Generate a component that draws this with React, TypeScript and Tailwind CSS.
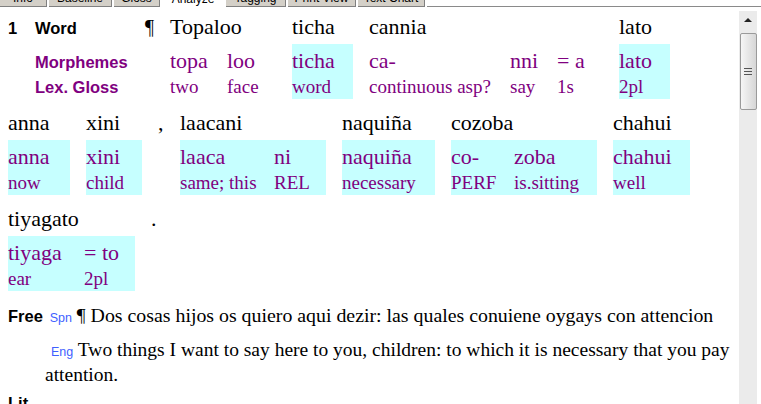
type Morph = { m: string; g: string; w: string };
type Item =
  | { kind: "word"; word: string; hl?: boolean; morphs: Morph[] }
  | { kind: "punct"; text: string; w: string };

const PURPLE = "text-[#800080]";
const HL = "bg-[#c6ffff]";
const SANS = "font-['Liberation_Sans',Arial,sans-serif]";

const tabs = [
  { label: "Info", w: "w-[47px]" },
  { label: "Baseline", w: "w-[63px]" },
  { label: "Gloss", w: "w-[46px]" },
  { label: "Analyze", w: "w-[62px]", active: true },
  { label: "Tagging", w: "w-[60px]" },
  { label: "Print View", w: "w-[68px]" },
  { label: "Text Chart", w: "w-[67px]" },
];

const row1: Item[] = [
  {
    kind: "word",
    word: "Topaloo",
    morphs: [
      { m: "topa", g: "two", w: "w-[57px]" },
      { m: "loo", g: "face", w: "w-[49px]" },
    ],
  },
  { kind: "word", word: "ticha", hl: true, morphs: [{ m: "ticha", g: "word", w: "w-[61px]" }] },
  {
    kind: "word",
    word: "cannia",
    morphs: [
      { m: "ca-", g: "continuous asp?", w: "w-[141px]" },
      { m: "nni", g: "say", w: "w-[47px]" },
      { m: "= a", g: "1s", w: "w-[46px]" },
    ],
  },
  { kind: "word", word: "lato", hl: true, morphs: [{ m: "lato", g: "2pl", w: "w-[51px]" }] },
];

const row2: Item[] = [
  { kind: "word", word: "anna", hl: true, morphs: [{ m: "anna", g: "now", w: "w-[62px]" }] },
  { kind: "word", word: "xini", hl: true, morphs: [{ m: "xini", g: "child", w: "w-[56px]" }] },
  { kind: "punct", text: ",", w: "w-[22px]" },
  {
    kind: "word",
    word: "laacani",
    hl: true,
    morphs: [
      { m: "laaca", g: "same; this", w: "w-[94px]" },
      { m: "ni", g: "REL", w: "w-[52px]" },
    ],
  },
  { kind: "word", word: "naquiña", hl: true, morphs: [{ m: "naquiña", g: "necessary", w: "w-[93px]" }] },
  {
    kind: "word",
    word: "cozoba",
    hl: true,
    morphs: [
      { m: "co-", g: "PERF", w: "w-[63px]" },
      { m: "zoba", g: "is.sitting", w: "w-[83px]" },
    ],
  },
  { kind: "word", word: "chahui", hl: true, morphs: [{ m: "chahui", g: "well", w: "w-[77px]" }] },
];

const row3: Item[] = [
  {
    kind: "word",
    word: "tiyagato",
    hl: true,
    morphs: [
      { m: "tiyaga", g: "ear", w: "w-[76px]" },
      { m: "= to", g: "2pl", w: "w-[51px]" },
    ],
  },
  { kind: "punct", text: ".", w: "w-[20px]" },
];

function Bundle({ item }: { item: Item }) {
  if (item.kind === "punct") {
    return (
      <div className={`${item.w} shrink-0`}>
        <div className="h-[30px] text-[22px] leading-[30px]">{item.text}</div>
      </div>
    );
  }
  return (
    <div className="mr-4 shrink-0">
      <div className="h-[30px] text-[22px] leading-[30px] whitespace-nowrap">{item.word}</div>
      <div className={`mt-[2px] pt-[2px] pb-[1px] flex ${item.hl ? HL : ""}`}>
        {item.morphs.map((m, i) => (
          <div key={i} className={`${m.w} shrink-0 ${PURPLE} whitespace-nowrap`}>
            <div className="text-[22px] leading-[30px]">{m.m}</div>
            <div className="text-[19px] leading-[22px]">{m.g}</div>
          </div>
        ))}
      </div>
    </div>
  );
}

function Scrollbar() {
  return (
    <div className="w-[18px] mt-[4px] mr-[4px] bg-[#ebebeb] flex flex-col items-center">
      <div className="h-[22px] pt-[7px] flex justify-center">
        <div className="w-0 h-0 border-l-[4px] border-r-[4px] border-b-[4px] border-l-transparent border-r-transparent border-b-[#222]" />
      </div>
      <div className="w-[17px] h-[77px] border border-[#9a9a9a] rounded-[2px] bg-linear-to-r from-[#f6f6f6] to-[#d6d6d6] flex flex-col items-center justify-center gap-[2px]">
        <div className="w-[8px] h-[1px] bg-[#555]" />
        <div className="w-[8px] h-[1px] bg-[#555]" />
        <div className="w-[8px] h-[1px] bg-[#555]" />
      </div>
    </div>
  );
}

export default function App() {
  return (
    <div className="w-[761px] h-[404px] overflow-hidden bg-white text-black font-['Liberation_Serif','Times_New_Roman',serif]">
      {/* Tab strip, mostly scrolled out of view */}
      <div className="h-[7px] flex overflow-hidden">
        {tabs.map((t) => (
          <div
            key={t.label}
            className={`${t.w} shrink-0 mr-[2px] h-[7px] overflow-hidden flex flex-col justify-end ${
              t.active ? "bg-white" : "bg-[#d4d0c8] border-r border-b border-[#808080]"
            }`}
          >
            <div className={`${SANS} text-[12px] leading-[12px] text-center pb-[2px] whitespace-nowrap`}>
              {t.label}
            </div>
          </div>
        ))}
        <div className="flex-1 h-[7px] border-b border-[#8a8a8a]" />
      </div>

      <div className="flex h-[397px]">
        <div className="flex-1 min-w-0 pl-2 pt-[5px]">
          {/* Row 1 with line labels */}
          <div className="flex mb-[9px]">
            <div className="w-[27px] shrink-0">
              <div className="h-[30px] text-[22px] leading-[30px]">
                <span className={`${SANS} font-bold text-[16.5px] leading-none`}>1</span>
              </div>
            </div>
            <div className="w-[110px] shrink-0 whitespace-nowrap">
              <div className="h-[30px] text-[22px] leading-[30px]">
                <span className={`${SANS} font-bold text-[16.5px] leading-none`}>Word</span>
              </div>
              <div className="mt-[4px] text-[22px] leading-[30px]">
                <span className={`${SANS} font-bold text-[16.5px] leading-none ${PURPLE}`}>Morphemes</span>
              </div>
              <div className="text-[19px] leading-[22px]">
                <span className={`${SANS} font-bold text-[16.5px] leading-none ${PURPLE}`}>Lex. Gloss</span>
              </div>
            </div>
            <div className="w-[25px] shrink-0">
              <div className="h-[30px] text-[20px] leading-[30px]">¶</div>
            </div>
            {row1.map((it, i) => (
              <Bundle key={i} item={it} />
            ))}
          </div>

          <div className="flex mb-[9px]">
            {row2.map((it, i) => (
              <Bundle key={i} item={it} />
            ))}
          </div>

          <div className="flex">
            {row3.map((it, i) => (
              <Bundle key={i} item={it} />
            ))}
          </div>

          {/* Free translations */}
          <div className="mt-[12px] text-[19.5px] leading-[25px] whitespace-nowrap">
            <span className={`${SANS} font-bold text-[16.5px] leading-none`}>Free</span>{" "}
            <span className={`${SANS} text-[12.5px] leading-none text-[#3f5fff] ml-[2px]`}>Spn</span>{" "}
            ¶ <span className="text-[19.85px]">Dos cosas hijos os quiero aqui dezir: las quales conuiene oygays con attencion</span>
          </div>
          <div className="mt-[9px] pl-[37px] text-[19.5px] leading-[25px]">
            <span className={`${SANS} text-[12.5px] leading-none text-[#3f5fff] ml-[6px]`}>Eng</span>{" "}
            Two things I want to say here to you, children: to which it is necessary that you pay attention.
          </div>
          <div className="mt-[3px] text-[19.5px] leading-[25px]">
            <span className={`${SANS} font-bold text-[16.5px] leading-none`}>Lit</span>
          </div>
        </div>
        <Scrollbar />
      </div>
    </div>
  );
}
